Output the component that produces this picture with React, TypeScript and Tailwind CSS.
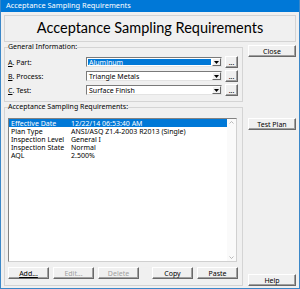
import React from 'react';

/* classic 3D push button */
const Btn = ({
  label,
  disabled = false,
  className = '',
}: {
  label: React.ReactNode;
  disabled?: boolean;
  className?: string;
}) => (
  <button
    type="button"
    className={`flex h-[12px] items-center justify-center border border-t-white border-l-white border-r-[#696969] border-b-[#696969] bg-[#f0f0f0] text-[7px] leading-none shadow-[inset_-1px_-1px_0_#a0a0a0] ${
      disabled ? 'text-[#a0a0a0]' : 'text-black'
    } ${className}`}
  >
    {label}
  </button>
);

const Combo = ({ value, selected = false }: { value: string; selected?: boolean }) => (
  <div className="flex h-[10px] w-[136px] border border-t-[#7a7a7a] border-l-[#7a7a7a] border-r-[#e3e3e3] border-b-[#e3e3e3] bg-white">
    <div className="flex flex-1 items-center p-[1px]">
      <span
        className={`flex h-full flex-1 items-center pl-[1px] text-[7px] leading-none ${
          selected ? 'bg-[#0078d7] text-white' : 'text-black'
        }`}
      >
        {value}
      </span>
    </div>
    <div className="flex w-[9px] items-center justify-center border border-t-white border-l-white border-r-[#696969] border-b-[#696969] bg-[#f0f0f0]">
      <svg width="5" height="3" viewBox="0 0 5 3">
        <path d="M0 0h5L2.5 3z" fill="#000" />
      </svg>
    </div>
  </div>
);

const fields: { key: string; rest: string; value: string; selected?: boolean }[] = [
  { key: 'A', rest: '. Part:', value: 'Aluminum', selected: true },
  { key: 'B', rest: '. Process:', value: 'Triangle Metals' },
  { key: 'C', rest: '. Test:', value: 'Surface Finish' },
];

const rows: [string, string][] = [
  ['Effective Date', '12/22/14 06:53:40 AM'],
  ['Plan Type', 'ANSI/ASQ Z1.4-2003 R2013 (Single)'],
  ['Inspection Level', 'General I'],
  ['Inspection State', 'Normal'],
  ['AQL', '2.500%'],
];

export default function App() {
  return (
    <div className="flex h-[289px] w-[300px] flex-col border-x border-b border-[#3b87c8] bg-[#f0f0f0] font-['Noto_Sans',sans-serif] text-black">
      {/* Title bar */}
      <div className="flex h-[12px] items-center bg-[#0078d7] pl-[5px] text-[7.4px] leading-none text-white">
        Acceptance Sampling Requirements
      </div>

      <div className="flex flex-1 flex-col px-[3px] pb-[2px] pt-[3px]">
        {/* Heading */}
        <div className="flex h-[27px] items-center justify-center border border-[#d4d4d4] font-['Lato',sans-serif] text-[14.5px] leading-none">
          Acceptance Sampling Requirements
        </div>

        <div className="flex flex-1 gap-[5px]">
          {/* Left column */}
          <div className="flex w-[239px] flex-col">
            <fieldset className="border border-[#d4d4d4] px-[3px] pb-[6px] pt-[5px]">
              <legend className="text-[7px] leading-[10px]">General Information:</legend>
              <div className="flex flex-col gap-[4px]">
                {fields.map((f) => (
                  <div key={f.key} className="flex h-[10px] items-center">
                    <span className="w-[78px] text-[7px] leading-none">
                      <u>{f.key}</u>
                      {f.rest}
                    </span>
                    <Combo value={f.value} selected={f.selected} />
                    <Btn label="..." className="ml-[3px] h-[9px] w-[13px]" />
                  </div>
                ))}
              </div>
            </fieldset>

            <fieldset className="flex-1 border border-[#d4d4d4] px-[3px] pb-[5px] pt-[6px]">
              <legend className="text-[7px] leading-[10px]">Acceptance Sampling Requirements:</legend>
              <div className="flex h-[144px] w-[229px] border border-t-[#828282] border-l-[#828282] border-r-[#d0d0d0] border-b-[#d0d0d0] bg-white">
                <div className="flex-1">
                  {rows.map(([k, v], i) => (
                    <div
                      key={k}
                      className={`flex h-[8px] items-center pl-[2px] text-[7px] leading-none ${
                        i === 0 ? 'bg-[#0078d7] text-white' : 'text-black'
                      }`}
                    >
                      <span className="w-[60px]">{k}</span>
                      <span className="whitespace-nowrap">{v}</span>
                    </div>
                  ))}
                </div>
                <div className="flex w-[9px] flex-col items-center justify-between bg-[#fafafa] py-[2px]">
                  <svg width="5" height="3" viewBox="0 0 5 3">
                    <path d="M0.5 2.5L2.5 0.5L4.5 2.5" fill="none" stroke="#a8a8a8" strokeWidth="0.8" />
                  </svg>
                  <svg width="5" height="3" viewBox="0 0 5 3">
                    <path d="M0.5 0.5L2.5 2.5L4.5 0.5" fill="none" stroke="#a8a8a8" strokeWidth="0.8" />
                  </svg>
                </div>
              </div>
              <div className="mt-[5px] flex w-[230px] justify-between">
                <div className="flex gap-[4px]">
                  <Btn label={<span className="underline">Add...</span>} className="w-[41px]" />
                  <Btn label="Edit..." disabled className="w-[41px]" />
                  <Btn label="Delete" disabled className="w-[41px]" />
                </div>
                <div className="flex gap-[4px]">
                  <Btn label="Copy" className="w-[41px]" />
                  <Btn label="Paste" className="w-[41px]" />
                </div>
              </div>
            </fieldset>
          </div>

          {/* Right column */}
          <div className="flex w-[48px] flex-col">
            <Btn label="Close" className="mt-[3px] w-[48px]" />
            <Btn label="Test Plan" className="mt-[61px] w-[48px]" />
            <Btn label="Help" className="mt-auto w-[48px]" />
          </div>
        </div>
      </div>
    </div>
  );
}
